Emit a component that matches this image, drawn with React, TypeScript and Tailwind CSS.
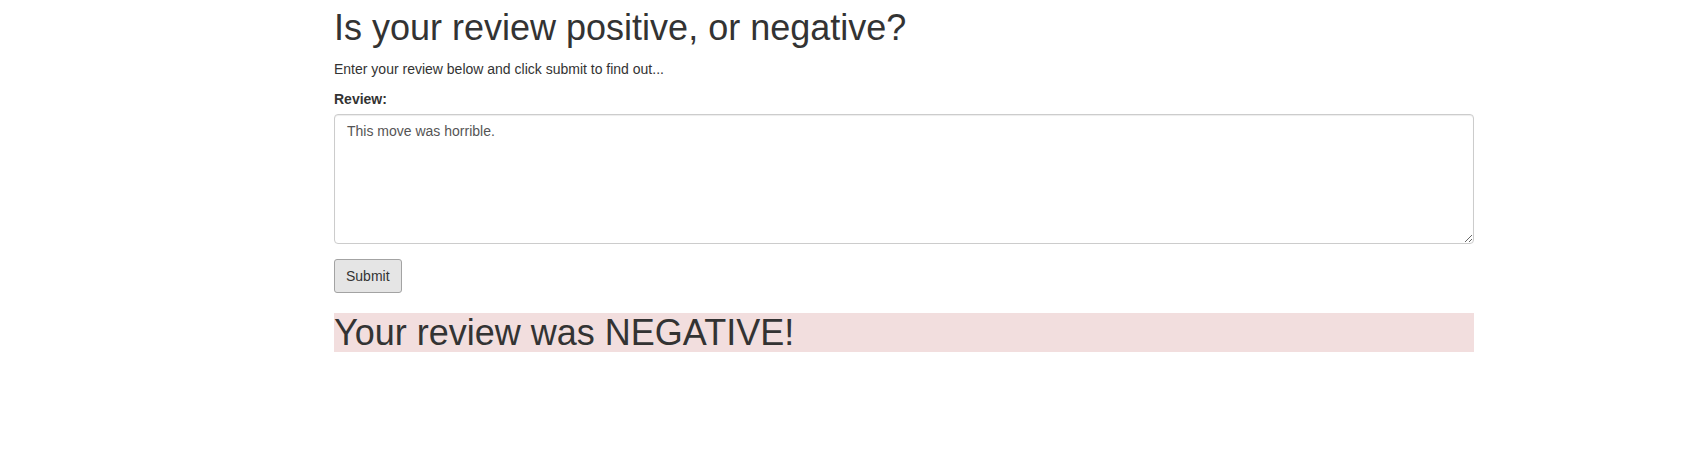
import React from "react";

export default function App() {
  return (
    <div className="min-h-[471px] w-full bg-white text-[#333]" style={{ fontFamily: '"Liberation Sans", Arial, sans-serif' }}>
      <div className="ml-[334px] w-[1140px] pt-[8px]">
        <h1 className="m-0 text-[36px] leading-[1.1] font-normal text-[#333]">Is your review positive, or negative?</h1>
        <p className="mt-[11px] mb-[10px] text-[14px] leading-[20px]">Enter your review below and click submit to find out...</p>
        <div className="mb-[15px]">
          <label className="block mb-[5px] text-[14px] leading-[20px] font-bold">Review:</label>
          <textarea
            className="block w-full h-[130px] border border-[#ccc] rounded-[4px] px-[12px] py-[6px] text-[14px] leading-[20px] text-[#555] bg-white outline-none shadow-[inset_0_1px_1px_rgba(0,0,0,0.075)]"
            style={{ fontFamily: '"Liberation Sans", Arial, sans-serif' }}
            defaultValue="This move was horrible."
          />
        </div>
        <button
          type="button"
          className="block h-[34px] px-[11px] text-[14px] leading-[20px] text-[#333] bg-[#e5e5e5] border border-[#a3a3a3] rounded-[3px]"
          style={{ fontFamily: '"Liberation Sans", Arial, sans-serif' }}
        >
          Submit
        </button>
        <h1 className="mt-[20px] mb-[10px] text-[36px] leading-[1.1] font-normal text-[#333] bg-[#f2dede]">Your review was NEGATIVE!</h1>
      </div>
    </div>
  );
}
